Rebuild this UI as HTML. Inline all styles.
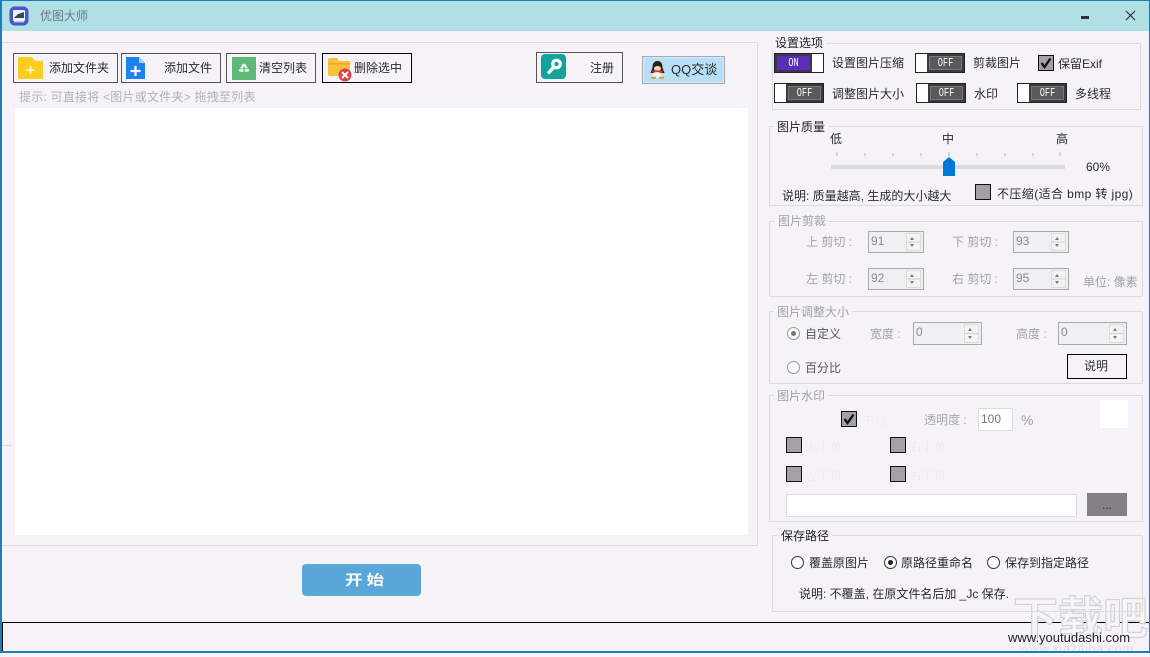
<!DOCTYPE html>
<html lang="zh"><head><meta charset="utf-8"><title>优图大师</title>
<style>
html,body{margin:0;padding:0}
body{width:1150px;height:653px;overflow:hidden;position:relative;background:#f5f3f7;font-family:"Liberation Sans","Noto Sans CJK SC",sans-serif;font-size:12px;color:#2a2a2a}
div,span,svg{position:absolute;box-sizing:border-box}
.t{white-space:nowrap;line-height:16px;height:16px}
.d{color:#a2a2a2}
.g{border:1px solid #dcdcdf}
.l{background:#f5f3f7;padding:0 3px;white-space:nowrap;line-height:14px;height:14px;color:#222}
.l.d{color:#a2a2a2}
.b{border:1px solid #555;background:#f5f3f7}
.k{border:1px solid #000}
.on,.off{width:50px;height:20px;background:#fff;border:1px solid #222}
.on i,.off i{position:absolute;display:block;box-sizing:border-box;top:0;height:18px;width:37px}
.on i{left:0;background:#5a2fb5;border:2px solid #3b3358}
.off i{right:0;background:#5a585a;border:2px solid #3a393b;box-shadow:inset 0 0 0 1px #777}
.on em,.off em{position:absolute;left:0;right:0;top:0;text-align:center;font:normal 12px/14px "Liberation Mono",monospace;color:#fff;transform:scaleX(.72)}
.spin{background:#f0eff2;border:1px solid #a9a9a9;color:#8a8a8a;font-size:12px;line-height:19px;padding-left:2px}
.spin b{position:absolute;right:2px;top:1px;width:13px;bottom:1px;background:linear-gradient(#f3f3f3 48%,#cfcfcf 48%,#cfcfcf 54%,#f3f3f3 54%);border:1px solid #dcdcdc;font-weight:normal}
.spin b:before{content:"";position:absolute;left:3px;top:3px;border:2.500px solid transparent;border-top:0;border-bottom:3px solid #777}
.spin b:after{content:"";position:absolute;left:3px;bottom:3px;border:2.500px solid transparent;border-bottom:0;border-top:3px solid #777}
.cb{width:16px;height:16px;background:#a3a1a4;border:1px solid #111}
.rd{width:13px;height:13px;border-radius:50%;border:1px solid #333;background:#fbfbfb}
.rd.sel:after{content:"";position:absolute;left:3px;top:3px;width:5px;height:5px;border-radius:50%;background:#222}
.rd.dis{border-color:#9a9a9a}
.rd.dis.sel:after{background:#777}
.w{font-family:"Liberation Serif","Noto Serif CJK SC",serif;color:#ebe9ec}
</style></head><body>

<!-- frame -->
<div style="left:0;top:0;width:1150px;height:653px;border:1px solid #1a7fb5;border-width:1px 1px 2px 2px;z-index:9;pointer-events:none"></div>

<!-- title bar -->
<div style="left:0;top:0;width:1150px;height:31px;background:#b0dfe5"></div>
<svg style="left:9px;top:6px" width="20" height="20" viewBox="0 0 20 20"><rect x="0.5" y="0.5" width="19" height="19" rx="5" fill="#4a55c8"/><rect x="4" y="4" width="12" height="11" rx="1" fill="#eef3fb"/><path d="M5 12 L9 8 L15 6 L15 12 Z" fill="#3a4658"/><rect x="5" y="15" width="10" height="1.500" fill="#b8c4ee"/></svg>
<div class="t" style="left:40px;top:8px;color:#6b7b80">优图大师</div>
<div style="left:1081px;top:16px;width:8px;height:3px;background:#333"></div>
<svg style="left:1125px;top:10px" width="11" height="11" viewBox="0 0 11 11"><path d="M1 1L10 10M10 1L1 10" stroke="#333" stroke-width="1.200" fill="none"/></svg>

<!-- left panel -->
<div style="left:1px;top:42px;width:757px;height:504px;border:1px solid #dcdcdf;border-left:0"></div>
<div style="left:15px;top:108px;width:733px;height:427px;background:#fff"></div>
<div style="left:2px;top:445px;width:10px;height:1px;background:#dcdcdf"></div>

<div class="b" style="left:13px;top:53px;width:105px;height:30px"></div>
<svg style="left:18px;top:57px" width="25" height="22" viewBox="0 0 25 22"><path d="M0 1Q0 0 1 0H14L17 4H24Q25 4 25 5V21Q25 22 24 22H1Q0 22 0 21Z" fill="#fdcd1f"/><path d="M12.500 9V17M8.500 13H16.500" stroke="#fff2b8" stroke-width="2"/></svg>
<div class="t" style="left:49px;top:60px">添加文件夹</div>

<div class="b" style="left:121px;top:53px;width:100px;height:30px"></div>
<svg style="left:126px;top:57px" width="19" height="22" viewBox="0 0 19 22"><path d="M0 0H13L19 6V22H0Z" fill="#1b82ee"/><path d="M13 0L19 6H13Z" fill="#a8d0f8"/><path d="M9.500 9V19M4.500 14H14.500" stroke="#fff" stroke-width="2.200"/></svg>
<div class="t" style="left:164px;top:60px">添加文件</div>

<div class="b" style="left:226px;top:53px;width:90px;height:30px"></div>
<svg style="left:232px;top:57px" width="24" height="23" viewBox="0 0 24 23"><rect width="24" height="23" fill="#5fb878"/><path d="M12 7L16 13.500H8Z" fill="none" stroke="#e6f5ea" stroke-width="2.400" stroke-linejoin="round" stroke-dasharray="5 1"/></svg>
<div class="t" style="left:259px;top:60px">清空列表</div>

<div class="k" style="left:322px;top:53px;width:90px;height:30px"></div>
<svg style="left:327px;top:58px" width="27" height="24" viewBox="0 0 27 24"><path d="M1 2Q1 0 3 0H10L12 3H22Q23 3 23 4V18H3Q1 18 1 16Z" fill="#f8c13a"/><rect x="1" y="5" width="22" height="1.500" fill="#eca52b"/><circle cx="18" cy="17" r="6.500" fill="#d9434e"/><path d="M15 14L21 20M21 14L15 20" stroke="#fff" stroke-width="2"/></svg>
<div class="t" style="left:354px;top:60px">删除选中</div>

<div class="t" style="left:19px;top:89px;color:#b2b2b2;letter-spacing:.23px">提示: 可直接将 &lt;图片或文件夹&gt; 拖拽至列表</div>

<div class="b" style="left:536px;top:52px;width:87px;height:31px"></div>
<svg style="left:541px;top:54px" width="25" height="25" viewBox="0 0 25 25"><rect width="25" height="25" rx="4" fill="#12a39c"/><circle cx="15.500" cy="10" r="3.800" fill="none" stroke="#fff" stroke-width="3.200"/><path d="M12.500 13.500L7 19.500" stroke="#fff" stroke-width="3.400"/></svg>
<div class="t" style="left:590px;top:60px">注册</div>

<div style="left:642px;top:56px;width:83px;height:28px;background:#b9dff6;border:1px solid #a9a9a9;box-shadow:inset 0 0 0 1px #d4ecfa"></div>
<svg style="left:649px;top:61px" width="17" height="18" viewBox="0 0 17 18"><path d="M8.500 0C12 0 13.500 3 13.500 6C13.500 8 15 10 15.500 12L13 12H4L1.500 12C2 10 3.500 8 3.500 6C3.500 3 5 0 8.500 0Z" fill="#222"/><ellipse cx="8.500" cy="7.500" rx="3.500" ry="2.500" fill="#f3d9a0"/><path d="M3 9.500H14L13 12H10.500L11 15H9L8 12H4Z" fill="#d2342a"/><ellipse cx="8" cy="14" rx="4.500" ry="3" fill="#f2f2f2"/><path d="M2 16.800H7M10 16.800H15" stroke="#e9a21e" stroke-width="2"/></svg>
<div class="t" style="left:671px;top:62px;font-size:13px;color:#2a2a2a">QQ交谈</div>

<!-- start button -->
<div style="left:302px;top:564px;width:119px;height:32px;background:#5ba6d8;border-radius:4px"></div>
<div class="t" style="left:345px;top:571px;width:42px;height:18px;line-height:18px;color:#fff;font-weight:bold;font-size:14px;font-family:'Noto Sans CJK SC',sans-serif;transform:scaleX(1.25);transform-origin:0 50%;white-space:nowrap">开 始</div>

<!-- status bar -->
<div style="left:2px;top:622px;width:1148px;height:30px;border:1px solid #000"></div>

<!-- site watermark -->
<div style="left:1013px;top:587px;white-space:nowrap;font-size:45px;line-height:56px;color:#f7f5f9;-webkit-text-stroke:1.200px #d2d2d2;font-weight:bold;font-family:'Noto Sans CJK SC',sans-serif">下载吧</div>
<div class="t" style="left:1020px;top:641px;font-size:13px;color:#dedede;letter-spacing:.4px">www.xiazaiba.com</div>
<div class="t" style="left:1008px;top:630px;font-size:13px;color:#222">www.youtudashi.com</div>

<!-- 设置选项 -->
<div class="g" style="left:772px;top:43px;width:369px;height:67px"></div>
<div class="l" style="left:772px;top:36px">设置选项</div>
<div class="on" style="left:774px;top:53px"><i><em>ON</em></i></div>
<div class="t" style="left:832px;top:55px">设置图片压缩</div>
<div class="off" style="left:915px;top:53px"><i><em>OFF</em></i></div>
<div class="t" style="left:973px;top:55px">剪裁图片</div>
<div class="cb" style="left:1038px;top:55px"></div>
<svg style="left:1039px;top:56px" width="14" height="14" viewBox="0 0 14 14"><path d="M2.500 7L5.500 11L11.500 2.500" stroke="#111" stroke-width="2.300" fill="none"/></svg>
<div class="t" style="left:1058px;top:56px">保留Exif</div>
<div class="off" style="left:774px;top:83px"><i><em>OFF</em></i></div>
<div class="t" style="left:832px;top:86px">调整图片大小</div>
<div class="off" style="left:916px;top:83px"><i><em>OFF</em></i></div>
<div class="t" style="left:974px;top:86px">水印</div>
<div class="off" style="left:1017px;top:83px"><i><em>OFF</em></i></div>
<div class="t" style="left:1075px;top:86px">多线程</div>

<!-- 图片质量 -->
<div class="g" style="left:769px;top:126px;width:374px;height:80px"></div>
<div class="l" style="left:774px;top:120px">图片质量</div>
<div class="t" style="left:830px;top:131px">低</div>
<div class="t" style="left:942px;top:131px">中</div>
<div class="t" style="left:1056px;top:131px">高</div>
<svg style="left:830px;top:150px" width="236" height="8" viewBox="0 0 236 8"><path d="M7 2v4M35 3v3M63 3v3M91 3v3M119 2v4M147 3v3M175 3v3M203 3v3M230 2v4" stroke="#b5b5b5" stroke-width="1"/></svg>
<div style="left:831px;top:165px;width:234px;height:4px;background:#dcdcdf"></div>
<svg style="left:943px;top:157px" width="12" height="19" viewBox="0 0 12 19"><path d="M0 5L6 0L12 5V19H0Z" fill="#0078d7"/></svg>
<div class="t" style="left:1086px;top:159px">60%</div>
<div class="t" style="left:782px;top:188px">说明: 质量越高, 生成的大小越大</div>
<div class="cb" style="left:975px;top:184px"></div>
<div class="t" style="left:997px;top:186px;letter-spacing:.4px">不压缩(适合 bmp 转 jpg)</div>

<!-- 图片剪裁 -->
<div class="g" style="left:769px;top:221px;width:374px;height:76px"></div>
<div class="l d" style="left:775px;top:214px">图片剪裁</div>
<div class="t d" style="left:806px;top:234px">上 剪切 :</div>
<div class="spin" style="left:868px;top:231px;width:56px;height:22px">91<b></b></div>
<div class="t d" style="left:952px;top:234px">下 剪切 :</div>
<div class="spin" style="left:1013px;top:231px;width:56px;height:22px">93<b></b></div>
<div class="t d" style="left:806px;top:271px">左 剪切 :</div>
<div class="spin" style="left:868px;top:268px;width:56px;height:22px">92<b></b></div>
<div class="t d" style="left:952px;top:271px">右 剪切 :</div>
<div class="spin" style="left:1013px;top:268px;width:56px;height:22px">95<b></b></div>
<div class="t d" style="left:1083px;top:274px">单位: 像素</div>

<!-- 图片调整大小 -->
<div class="g" style="left:769px;top:311px;width:374px;height:73px"></div>
<div class="l d" style="left:774px;top:305px">图片调整大小</div>
<div class="rd dis sel" style="left:787px;top:327px"></div>
<div class="t" style="left:805px;top:326px;color:#555">自定义</div>
<div class="t d" style="left:870px;top:326px">宽度 :</div>
<div class="spin" style="left:913px;top:322px;width:69px;height:23px">0<b></b></div>
<div class="t d" style="left:1016px;top:326px">高度 :</div>
<div class="spin" style="left:1058px;top:322px;width:69px;height:23px">0<b></b></div>
<div class="rd dis" style="left:787px;top:361px"></div>
<div class="t" style="left:805px;top:360px;color:#555">百分比</div>
<div class="k" style="left:1067px;top:354px;width:60px;height:25px;text-align:center;line-height:23px;color:#333;padding-right:2px">说明</div>

<!-- 图片水印 -->
<div class="g" style="left:769px;top:395px;width:374px;height:127px"></div>
<div class="l d" style="left:774px;top:389px">图片水印</div>
<div class="cb" style="left:841px;top:411px"></div>
<svg style="left:842px;top:412px" width="14" height="14" viewBox="0 0 14 14"><path d="M2.500 7L5.500 11L11.500 2.500" stroke="#111" stroke-width="2.300" fill="none"/></svg>
<div class="t w" style="left:862px;top:412px">中心</div>
<div class="t d" style="left:924px;top:412px;color:#a8a8a8">透明度 :</div>
<div style="left:978px;top:408px;width:35px;height:23px;background:#fff;border:1px solid #dcdcdf;color:#777;line-height:21px;padding-left:2px">100</div>
<div class="t d" style="left:1021px;top:412px;font-size:14px">%</div>
<div style="left:1100px;top:400px;width:28px;height:28px;background:#fff"></div>
<div class="cb" style="left:786px;top:437px"></div>
<div class="t w" style="left:806px;top:439px">左上角</div>
<div class="cb" style="left:890px;top:437px"></div>
<div class="t w" style="left:910px;top:439px">右上角</div>
<div class="cb" style="left:786px;top:466px"></div>
<div class="t w" style="left:806px;top:468px">左下角</div>
<div class="cb" style="left:890px;top:466px"></div>
<div class="t w" style="left:910px;top:468px">右下角</div>
<div style="left:786px;top:494px;width:291px;height:23px;background:#fff;border:1px solid #dcdcdf"></div>
<div style="left:1087px;top:493px;width:40px;height:23px;background:#828082;color:#333;text-align:center;line-height:24px">...</div>

<!-- 保存路径 -->
<div class="g" style="left:772px;top:535px;width:371px;height:77px"></div>
<div class="l" style="left:778px;top:529px">保存路径</div>
<div class="rd" style="left:791px;top:556px"></div>
<div class="t" style="left:809px;top:555px">覆盖原图片</div>
<div class="rd sel" style="left:884px;top:556px"></div>
<div class="t" style="left:901px;top:555px">原路径重命名</div>
<div class="rd" style="left:987px;top:556px"></div>
<div class="t" style="left:1005px;top:555px">保存到指定路径</div>
<div class="t" style="left:799px;top:586px">说明: 不覆盖, 在原文件名后加 _Jc 保存.</div>

</body></html>
